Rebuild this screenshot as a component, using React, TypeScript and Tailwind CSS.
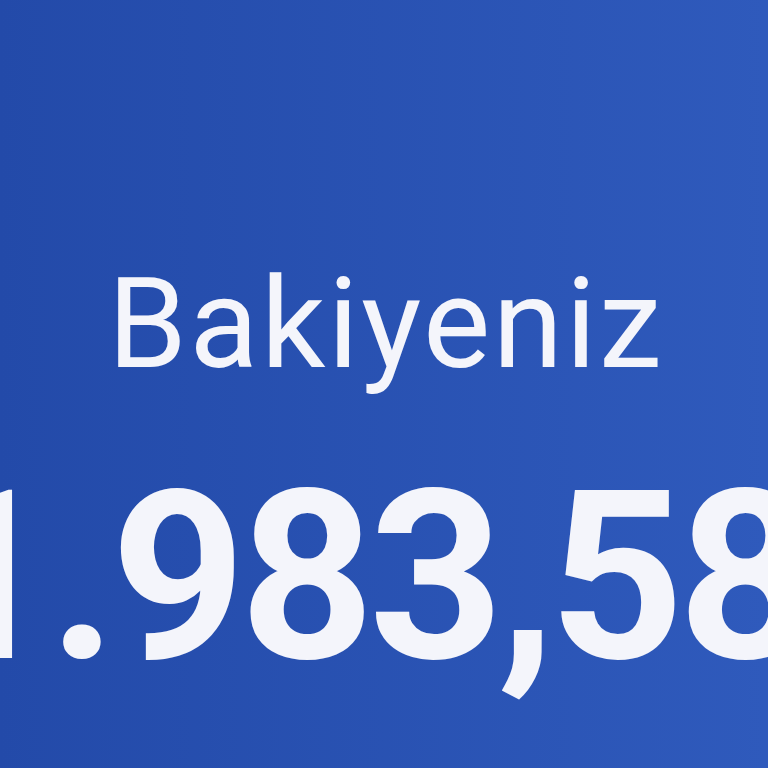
import React from "react";

export default function App() {
  return (
    <div className="w-[768px] h-[768px] overflow-hidden bg-gradient-to-r from-[#234aa9] to-[#2f5abc] font-['Roboto',sans-serif] text-[#f4f5fb]">
      <div className="pt-[260px] flex flex-col">
        {/* Balance label */}
        <div className="text-center text-[127px] leading-none font-normal tracking-[2.5px] pl-[4px]">Bakiyeniz</div>
        {/* Balance amount */}
        <div className="mt-[73px] ml-[-80px] whitespace-nowrap text-[235px] leading-none font-bold tracking-[-6px]">1.983,58</div>
      </div>
    </div>
  );
}
